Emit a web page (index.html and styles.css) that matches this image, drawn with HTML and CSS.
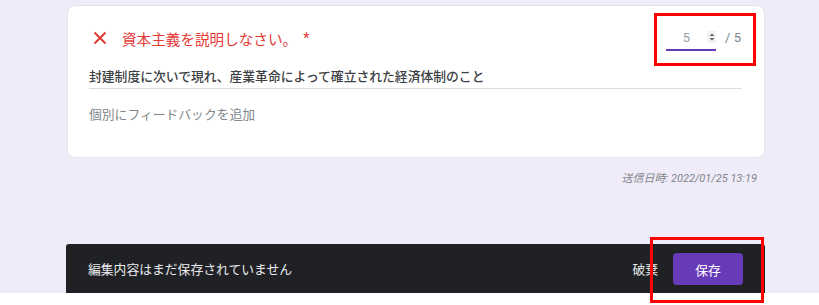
FILE: index.html
```html
<!DOCTYPE html>
<html lang="ja">
<head>
<meta charset="utf-8">
<link rel="stylesheet" href="styles.css">
</head>
<body>
<div class="page">
  <main class="content">
    <section class="card">
      <div class="q-row">
        <div class="q-title">
          <svg class="x-icon" viewBox="0 0 14 14" width="14" height="14"><path d="M1.5 1.5 L12.5 12.5 M12.5 1.5 L1.5 12.5" stroke="#e53935" stroke-width="2" fill="none"/></svg>
          <span class="q-text">資本主義を説明しなさい。</span><span class="req">*</span>
        </div>
        <div class="score">
          <div class="score-input">
            <span class="score-val">5</span>
            <span class="spinner"><svg viewBox="0 0 8 10" width="8" height="10"><path d="M1.5 4 L4 1.5 L6.5 4 Z M1.5 6 L4 8.5 L6.5 6 Z" fill="#5f6368"/></svg></span>
          </div>
          <span class="score-max">/ 5</span>
        </div>
      </div>
      <div class="answer">封建制度に次いで現れ、産業革命によって確立された経済体制のこと</div>
      <div class="feedback">個別にフィードバックを追加</div>
    </section>
    <div class="timestamp">送信日時: 2022/01/25 13:19</div>
    <div class="snackbar">
      <span class="snack-msg">編集内容はまだ保存されていません</span>
      <div class="snack-actions">
        <span class="discard">破棄</span>
        <button class="save">保存</button>
      </div>
    </div>
  </main>
  <div class="mark mark-score"></div>
  <div class="mark mark-save"></div>
</div>
</body>
</html>
```
FILE: styles.css
```css
* { box-sizing: border-box; }
html, body { margin: 0; padding: 0; }
body {
  width: 819px;
  height: 305px;
  overflow: hidden;
  background: #ffffff;
  font-family: Roboto, "Noto Sans CJK JP", sans-serif;
}
.page {
  position: relative;
  height: 293px;
  background: #f0ebf8;
}
.content {
  width: 698px;
  margin-left: 67px;
  padding-top: 5px;
}
.card {
  background: #fff;
  border: 1px solid #e6e3ec;
  border-radius: 8px;
  height: 153px;
  padding: 21px 23px 0 21px;
}
.q-row {
  display: flex;
  justify-content: space-between;
  align-items: flex-start;
  height: 33px;
}
.q-title {
  display: flex;
  align-items: center;
  height: 22px;
  font-family: "Noto Sans CJK JP", sans-serif;
  font-size: 14.6px;
  color: #e53935;
}
.x-icon { margin-left: 4px; margin-right: 15px; }
.req { margin-left: 6px; font-family: Roboto, sans-serif; }
.score {
  display: flex;
  align-items: flex-start;
  margin-top: 1px;
  font-size: 13px;
  color: #80868b;
}
.score-input {
  width: 50px;
  height: 23px;
  border-bottom: 2px solid #673ab7;
  display: flex;
  align-items: center;
  justify-content: flex-end;
  padding-bottom: 3px;
}
.score-val { margin-right: 17px; color: #9aa0a6; }
.spinner {
  width: 9px;
  height: 12px;
  background: #f1f3f4;
  display: flex;
  align-items: center;
  justify-content: center;
}
.score-max { margin-left: 9px; line-height: 20px; }
.answer {
  width: 653px;
  margin-top: 7px;
  font-family: "Noto Sans CJK JP", sans-serif;
  font-size: 12.8px;
  font-weight: 500;
  color: #3c4043;
  line-height: 18px;
  padding-bottom: 3px;
  border-bottom: 1px solid #dadce0;
}
.feedback {
  margin-top: 16px;
  font-family: "Noto Sans CJK JP", sans-serif;
  font-size: 12.8px;
  color: #80868b;
  line-height: 18px;
}
.timestamp {
  text-align: right;
  margin-top: 14px;
  padding-right: 8px;
  font-size: 11px;
  font-style: italic;
  color: #80868b;
  line-height: 14px;
}
.snackbar {
  margin-top: 58px;
  margin-left: -1px;
  height: 49px;
  background: #202124;
  border-radius: 3px 3px 0 0;
  display: flex;
  align-items: center;
  justify-content: space-between;
  padding: 0 22px 0 22px;
}
.snack-msg {
  font-family: "Noto Sans CJK JP", sans-serif;
  font-size: 12.8px;
  color: #e8eaed;
}
.snack-actions {
  display: flex;
  align-items: center;
}
.discard {
  font-family: "Noto Sans CJK JP", sans-serif;
  font-size: 12.8px;
  color: #e8eaed;
  margin-right: 15px;
}
.save {
  width: 70px;
  height: 32px;
  border: none;
  border-radius: 4px;
  background: #673ab7;
  color: #fff;
  font-family: "Noto Sans CJK JP", sans-serif;
  font-size: 12.8px;
  margin-top: 1px;
}
.mark {
  position: absolute;
  border: 3px solid #ff0000;
}
.mark-score { left: 654px; top: 13px; width: 102px; height: 53px; }
.mark-save { left: 650px; top: 237px; width: 114px; height: 66px; z-index: 2; }
```
